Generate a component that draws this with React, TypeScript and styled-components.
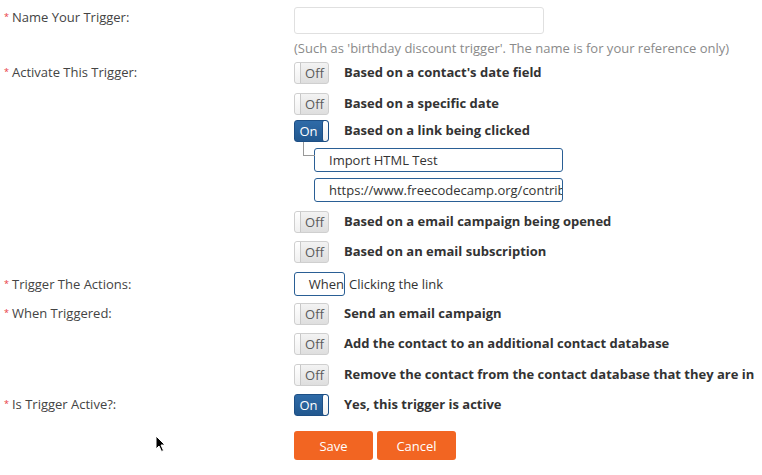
import React from "react";
import styled, { createGlobalStyle } from "styled-components";

const Global = createGlobalStyle`
  html, body { margin: 0; padding: 0; background: #fff; }
  body {
    font-family: "Open Sans", "Noto Sans", "Liberation Sans", sans-serif;
    font-size: 13px;
    color: #333;
  }
  * { box-sizing: border-box; }
`;

const Page = styled.div`
  position: relative;
  width: 762px;
  height: 475px;
  padding-top: 7px;
  overflow: hidden;
`;

const Row = styled.div<{ $mt?: number }>`
  display: grid;
  grid-template-columns: 294px 1fr;
  margin-top: ${(p) => p.$mt ?? 0}px;
`;

const Label = styled.div<{ $lh?: number }>`
  padding-left: 4px;
  line-height: ${(p) => p.$lh ?? 20}px;
  color: #444;
  font-size: 13px;
  display: flex;
  align-items: flex-start;
  gap: 3px;
`;

const Star = styled.span`
  color: #e8383d;
  font-size: 9px;
  line-height: inherit;
`;

const Control = styled.div`
  display: flex;
  flex-direction: column;
`;

const NameInput = styled.input`
  width: 250px;
  height: 27px;
  border: 1px solid #e0e0e0;
  border-radius: 3px;
  outline: none;
  font: inherit;
  padding: 0 8px;
`;

const Hint = styled.div`
  margin-top: 5px;
  line-height: 18px;
  color: #8a8a8a;
  font-size: 13px;
  white-space: nowrap;
`;

const Option = styled.div<{ $mb?: number }>`
  display: flex;
  align-items: center;
  height: 22px;
  margin-bottom: ${(p) => p.$mb ?? 0}px;
`;

const OptionText = styled.span<{ $bold?: boolean }>`
  margin-left: 15px;
  margin-top: -2px;
  font-weight: ${(p) => (p.$bold === false ? 400 : 700)};
  color: #333;
  white-space: nowrap;
`;

const ToggleBox = styled.div<{ $on: boolean }>`
  width: 35px;
  height: 22px;
  border-radius: 3px;
  flex: none;
  display: flex;
  overflow: hidden;
  border: 1px solid ${(p) => (p.$on ? "#1d4f85" : "#cfcfcf")};
  background: ${(p) =>
    p.$on
      ? "linear-gradient(#2f6ba8, #22588f)"
      : "linear-gradient(#f3f3f3, #dedede)"};
`;

const Knob = styled.div<{ $on: boolean }>`
  width: 6px;
  height: 100%;
  background: linear-gradient(#ffffff, #f0f0f0);
  border-${(p) => (p.$on ? "left" : "right")}: 1px solid ${(p) => (p.$on ? "#1d4f85" : "#c8c8c8")};
  border-radius: ${(p) => (p.$on ? "2px" : "2px 0 0 2px")};
  order: ${(p) => (p.$on ? 2 : 0)};
`;

const ToggleLabel = styled.span<{ $on: boolean }>`
  flex: 1;
  order: 1;
  text-align: center;
  font-size: 13px;
  line-height: 20px;
  color: ${(p) => (p.$on ? "#fff" : "#5a5a5a")};
`;

const Toggle = ({ on }: { on: boolean }) => (
  <ToggleBox $on={on}>
    <Knob $on={on} />
    <ToggleLabel $on={on}>{on ? "On" : "Off"}</ToggleLabel>
  </ToggleBox>
);

const SubFields = styled.div`
  display: flex;
  flex-direction: column;
  gap: 6px;
  padding-left: 20px;
  margin-top: 6px;
  margin-bottom: 9px;
`;

const SubWrap = styled.div<{ $link?: boolean }>`
  position: relative;
  &::before {
    content: "";
    display: ${(p) => (p.$link ? "block" : "none")};
    position: absolute;
    left: -11px;
    top: -6px;
    width: 11px;
    height: 13px;
    border-left: 1px solid #999;
    border-bottom: 1px solid #999;
  }
`;

const SubInput = styled.input`
  width: 249px;
  height: 24px;
  border: 1px solid #2a5f95;
  border-radius: 3px;
  outline: none;
  font: inherit;
  color: #333;
  padding: 0 0 0 14px;
  display: block;
`;

const SelectRow = styled.div`
  display: flex;
  align-items: center;
  height: 24px;
`;

const WhenBox = styled.div`
  width: 51px;
  height: 24px;
  border: 1px solid #2a5f95;
  border-radius: 3px;
  text-align: right;
  line-height: 22px;
  overflow: hidden;
  white-space: nowrap;
  color: #333;
  padding-right: 0;
`;

const SelectText = styled.span`
  margin-left: 4px;
  color: #333;
`;

const Buttons = styled.div`
  display: flex;
  gap: 4px;
`;

const Button = styled.button`
  width: 79px;
  height: 29px;
  border: none;
  border-radius: 3px;
  background: #f26522;
  color: #fff;
  font: inherit;
  font-size: 13px;
  cursor: pointer;
`;

const Cursor = styled.svg`
  position: absolute;
  left: 155px;
  top: 435px;
`;

const Req = ({ children, lh }: { children: React.ReactNode; lh?: number }) => (
  <Label $lh={lh}>
    <Star>*</Star>
    <span>{children}</span>
  </Label>
);

export default function App() {
  return (
    <>
      <Global />
      <Page>
        <Row>
          <Req>Name Your Trigger:</Req>
          <Control>
            <NameInput />
            <Hint>(Such as 'birthday discount trigger'. The name is for your reference only)</Hint>
          </Control>
        </Row>

        <Row $mt={5}>
          <Req>Activate This Trigger:</Req>
          <Control>
            <Option $mb={9}>
              <Toggle on={false} />
              <OptionText>Based on a contact's date field</OptionText>
            </Option>
            <Option $mb={5}>
              <Toggle on={false} />
              <OptionText>Based on a specific date</OptionText>
            </Option>
            <Option>
              <Toggle on={true} />
              <OptionText>Based on a link being clicked</OptionText>
            </Option>
            <SubFields>
              <SubWrap $link>
                <SubInput defaultValue="Import HTML Test" />
              </SubWrap>
              <SubWrap>
                <SubInput defaultValue="https://www.freecodecamp.org/contribute/" />
              </SubWrap>
            </SubFields>
            <Option $mb={8}>
              <Toggle on={false} />
              <OptionText>Based on a email campaign being opened</OptionText>
            </Option>
            <Option>
              <Toggle on={false} />
              <OptionText>Based on an email subscription</OptionText>
            </Option>
          </Control>
        </Row>

        <Row $mt={9}>
          <Req lh={24}>Trigger The Actions:</Req>
          <Control>
            <SelectRow>
              <WhenBox>When</WhenBox>
              <SelectText>Clicking the link</SelectText>
            </SelectRow>
          </Control>
        </Row>

        <Row $mt={7}>
          <Req>When Triggered:</Req>
          <Control>
            <Option $mb={8}>
              <Toggle on={false} />
              <OptionText>Send an email campaign</OptionText>
            </Option>
            <Option $mb={9}>
              <Toggle on={false} />
              <OptionText>Add the contact to an additional contact database</OptionText>
            </Option>
            <Option>
              <Toggle on={false} />
              <OptionText>Remove the contact from the contact database that they are in</OptionText>
            </Option>
          </Control>
        </Row>

        <Row $mt={8}>
          <Req>Is Trigger Active?:</Req>
          <Control>
            <Option>
              <Toggle on={true} />
              <OptionText>Yes, this trigger is active</OptionText>
            </Option>
          </Control>
        </Row>

        <Row $mt={15}>
          <div />
          <Buttons>
            <Button>Save</Button>
            <Button>Cancel</Button>
          </Buttons>
        </Row>

        <Cursor width="12" height="18" viewBox="0 0 12 18">
          <path d="M1 1 L1 14 L4 11 L6.5 16.5 L8.5 15.5 L6 10 L10 10 Z" fill="#000" stroke="#fff" strokeWidth="1" />
        </Cursor>
      </Page>
    </>
  );
}
